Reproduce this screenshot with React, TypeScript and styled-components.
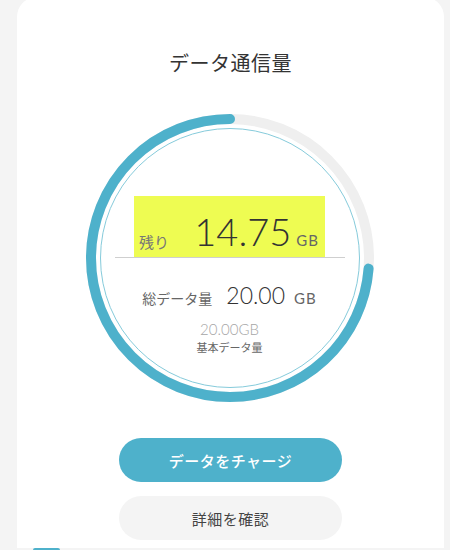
import React from "react";
import styled, { createGlobalStyle } from "styled-components";

const GlobalStyle = createGlobalStyle`
    html, body {
        margin: 0;
        padding: 0;
        background: #f4f4f4;
    }
    body {
        font-family: "Noto Sans CJK JP", "Noto Sans", sans-serif;
        color: #333;
    }
`;

const SIZE = 288;
const STROKE = 10;
const RADIUS = (SIZE - STROKE) / 2;
const CIRC = 2 * Math.PI * RADIUS;

function Gauge({ remain, total }: { remain: number; total: number }) {
    const ratio = remain / total;
    return (
        <GaugeWrap>
            <GaugeSvg width={SIZE} height={SIZE} viewBox={`0 0 ${SIZE} ${SIZE}`}>
                <circle cx={SIZE / 2} cy={SIZE / 2} r={RADIUS} fill="none" stroke="#efefef" strokeWidth={STROKE} />
                {/* 12時から反時計回り */}
                <circle
                    cx={SIZE / 2}
                    cy={SIZE / 2}
                    r={RADIUS}
                    fill="none"
                    stroke="#4eb1cb"
                    strokeWidth={STROKE}
                    strokeLinecap="round"
                    strokeDasharray={`${CIRC * ratio} ${CIRC}`}
                    transform={`translate(${SIZE} 0) scale(-1 1) rotate(-90 ${SIZE / 2} ${SIZE / 2})`}
                />
                <circle cx={SIZE / 2} cy={SIZE / 2} r={129.5} fill="none" stroke="#86cbdb" strokeWidth={1} />
            </GaugeSvg>
            <GaugeBody>
                <RemainBox>
                    <RemainLabel>残り</RemainLabel>
                    <RemainValue>
                        <BigNum>{remain.toFixed(2)}</BigNum>
                        <Unit>GB</Unit>
                    </RemainValue>
                </RemainBox>
                <Divider />
                <TotalRow>
                    <TotalLabel>総データ量</TotalLabel>
                    <TotalNum>{total.toFixed(2)}</TotalNum>
                    <Unit>GB</Unit>
                </TotalRow>
                <BaseNum>20.00GB</BaseNum>
                <BaseLabel>基本データ量</BaseLabel>
            </GaugeBody>
        </GaugeWrap>
    );
}

export default function App() {
    return (
        <>
            <GlobalStyle />
            <Page>
                <Card>
                    <Title>データ通信量</Title>
                    <Gauge remain={14.75} total={20} />
                    <Buttons>
                        <Button $primary>データをチャージ</Button>
                        <Button>詳細を確認</Button>
                    </Buttons>
                </Card>
                <NextTab />
            </Page>
        </>
    );
}

const Page = styled.div`
    width: 450px;
    height: 550px;
    overflow: hidden;
    padding: 0 6px 0 17px;
    box-sizing: border-box;
`;

const Card = styled.div`
    margin-top: -3px;
    background: #fff;
    border-radius: 20px 20px 0 0;
    padding: 52px 0 8px;
    display: flex;
    flex-direction: column;
    align-items: center;
`;

const Title = styled.h2`
    margin: 0;
    font-size: 20px;
    line-height: 28px;
    font-weight: 400;
    color: #333;
    letter-spacing: 0.5px;
`;

const GaugeWrap = styled.div`
    position: relative;
    width: ${SIZE}px;
    height: ${SIZE}px;
    margin-top: 37px;
    margin-left: -2px;
`;

const GaugeSvg = styled.svg`
    position: absolute;
    inset: 0;
`;

const GaugeBody = styled.div`
    position: relative;
    height: 100%;
    padding-top: 82px;
    box-sizing: border-box;
    display: flex;
    flex-direction: column;
    align-items: center;
`;

const RemainBox = styled.div`
    width: 191px;
    height: 61px;
    box-sizing: border-box;
    background: #eefc52;
    padding: 0 6px 7px 5px;
    display: flex;
    align-items: flex-end;
    justify-content: space-between;
`;

const RemainLabel = styled.span`
    font-size: 15px;
    line-height: 1;
    color: #777;
    padding-bottom: 1px;
`;

const RemainValue = styled.span`
    display: flex;
    align-items: baseline;
    gap: 5px;
`;

const BigNum = styled.span`
    font-family: "Lato", "Noto Sans", sans-serif;
    font-weight: 300;
    font-size: 38px;
    line-height: 1;
    color: #333;
`;

const Unit = styled.span`
    font-family: "Lato", "Noto Sans", sans-serif;
    font-size: 15px;
    line-height: 1;
    color: #666;
    letter-spacing: 1px;
`;

const Divider = styled.div`
    width: 230px;
    height: 1px;
    background: #cfcfcf;
`;

const TotalRow = styled.div`
    margin-top: 23px;
    display: flex;
    align-items: baseline;
`;

const TotalLabel = styled.span`
    font-size: 14px;
    color: #666;
    margin-right: 14px;
`;

const TotalNum = styled.span`
    font-family: "Lato", "Noto Sans", sans-serif;
    font-weight: 300;
    font-size: 23px;
    color: #333;
    margin-right: 9px;
`;

const BaseNum = styled.div`
    margin-top: 11px;
    font-family: "Lato", "Noto Sans", sans-serif;
    font-weight: 300;
    font-size: 15px;
    line-height: 18px;
    color: #a6a6a6;
`;

const BaseLabel = styled.div`
    margin-top: 1px;
    font-size: 11px;
    line-height: 16px;
    color: #666;
`;

const Buttons = styled.div`
    margin-top: 36px;
    display: flex;
    flex-direction: column;
    gap: 14px;
`;

const Button = styled.button<{ $primary?: boolean }>`
    width: 223px;
    height: 44px;
    border: 0;
    border-radius: 22px;
    font-family: "Noto Sans CJK JP", sans-serif;
    font-size: 15px;
    font-weight: ${(p) => (p.$primary ? 500 : 400)};
    letter-spacing: 0.5px;
    background: ${(p) => (p.$primary ? "#4eb1cb" : "#f4f4f4")};
    color: ${(p) => (p.$primary ? "#fff" : "#444")};
    cursor: pointer;
`;

const NextTab = styled.div`
    width: 27px;
    height: 4px;
    margin-left: 16px;
    border-radius: 2px;
    background: #4eb1cb;
`;
